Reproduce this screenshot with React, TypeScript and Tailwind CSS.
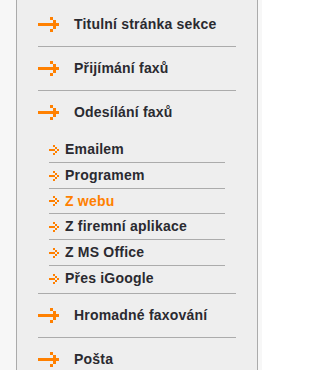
import React from "react";

const BigArrow = () => (
  <svg width="21" height="15" viewBox="0 0 21 15" className="shrink-0" shapeRendering="crispEdges">
    <g fill="#ff8000">
      <rect x="0" y="6" width="18" height="3" />
      <rect x="12" y="0" width="3" height="3" />
      <rect x="15" y="3" width="3" height="3" />
      <rect x="18" y="6" width="3" height="3" />
      <rect x="15" y="9" width="3" height="3" />
      <rect x="12" y="12" width="3" height="3" />
    </g>
  </svg>
);

const SmallArrow = () => (
  <svg width="10" height="10" viewBox="0 0 10 10" className="shrink-0" shapeRendering="crispEdges">
    <g fill="#ff8000">
      <rect x="0" y="4" width="6" height="2" />
      <rect x="4" y="0" width="2" height="2" />
      <rect x="6" y="2" width="2" height="2" />
      <rect x="8" y="4" width="2" height="2" />
      <rect x="6" y="6" width="2" height="2" />
      <rect x="4" y="8" width="2" height="2" />
    </g>
  </svg>
);

const subs = [
  { label: "Emailem", active: false, cls: "flex h-[26px] items-center border-b border-[#ababab]" },
  { label: "Programem", active: false, cls: "flex h-[26px] items-center border-b border-[#ababab]" },
  { label: "Z webu", active: true, cls: "flex h-[25px] items-center border-b border-[#ababab]" },
  { label: "Z firemní aplikace", active: false, cls: "flex h-[26px] items-center border-b border-[#ababab]" },
  { label: "Z MS Office", active: false, cls: "flex h-[26px] items-center border-b border-[#ababab]" },
  { label: "Přes iGoogle", active: false, cls: "flex h-[25px] items-center" },
];

function TopRow({ label }: { label: string }) {
  return (
    <div className="flex h-[43px] items-center">
      <BigArrow />
      <span className="ml-[15px] text-[14px] font-bold tracking-[0.2px] text-[#2a2a30]">{label}</span>
    </div>
  );
}

export default function App() {
  return (
    <div
      className="h-[370px] w-[262px] overflow-hidden bg-[#f7f7f7] pl-4 pr-1"
      style={{ fontFamily: '"Liberation Sans", Arial, sans-serif' }}
    >
      <div className="h-[370px] overflow-hidden border-x border-[#ababab] bg-[#eeeeee] pt-[3px]">
        <ul className="mx-[21px]">
          <li className="border-b border-[#ababab]">
            <TopRow label="Titulní stránka sekce" />
          </li>
          <li className="border-b border-[#ababab]">
            <TopRow label="Přijímání faxů" />
          </li>
          <li className="border-b border-[#ababab]">
            <TopRow label="Odesílání faxů" />
            <ul className="mx-[11px] pb-[2px] pt-[3px]">
              {subs.map((s) => (
                <li key={s.label} className={s.cls}>
                  <SmallArrow />
                  <span
                    className={
                      s.active
                        ? "ml-[6px] text-[14px] font-bold tracking-[0.2px] text-[#ff8000]"
                        : "ml-[6px] text-[14px] font-bold tracking-[0.2px] text-[#2a2a30]"
                    }
                  >
                    {s.label}
                  </span>
                </li>
              ))}
            </ul>
          </li>
          <li className="border-b border-[#ababab]">
            <TopRow label="Hromadné faxování" />
          </li>
          <li className="border-b border-[#ababab]">
            <TopRow label="Pošta" />
          </li>
        </ul>
      </div>
    </div>
  );
}
